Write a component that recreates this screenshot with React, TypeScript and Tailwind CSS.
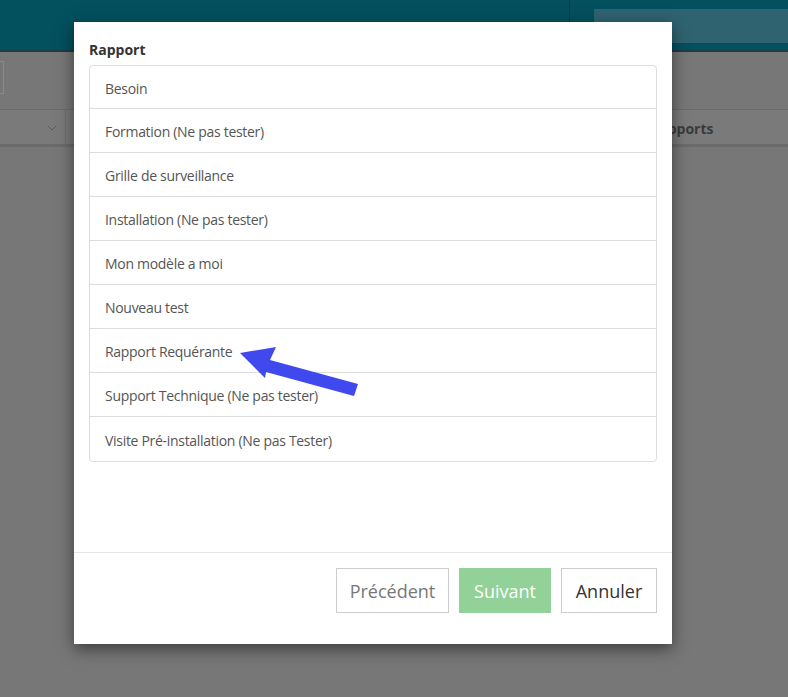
import React from 'react'

const reports = [
	'Besoin',
	'Formation (Ne pas tester)',
	'Grille de surveillance',
	'Installation (Ne pas tester)',
	'Mon modèle a moi',
	'Nouveau test',
	'Rapport Requérante',
	'Support Technique (Ne pas tester)',
	'Visite Pré-installation (Ne pas Tester)',
]

const font = { fontFamily: '"Open Sans", "Noto Sans", sans-serif' }

const App = () => {
	return (
		<div className="relative h-[697px] w-[788px] overflow-hidden bg-[#777777]" style={font}>
			{/* page behind the backdrop */}
			<div className="flex h-[52px] border-b-2 border-[#203c42] bg-[#03505f]">
				<div className="w-[570px] border-r border-[#01404b]"></div>
				<div className="flex-1 pl-[24px] pt-[9px]">
					<div className="h-[34px] bg-[#2f6370]"></div>
				</div>
			</div>
			<div className="mt-[9px] h-[33px] w-[4px] border border-l-0 border-[#8a8a8a]"></div>
			<div className="mt-[15px] flex h-[38px] border-t border-b-[3px] border-[#6b6b6b] bg-[#7a7a7a]">
				<div className="flex w-[66px] items-center justify-end border-r border-[#6b6b6b] pr-[8px] pt-[2px]">
					<svg width="10" height="6" viewBox="0 0 10 6" fill="none" stroke="#5a5a5a" strokeWidth="1">
						<path d="M1 1l4 4 4-4" />
					</svg>
				</div>
				<div className="flex flex-1 items-center pl-[584px] pt-[3px]">
					<span className="text-[14px] font-bold text-[#3a3a3a]">Rapports</span>
				</div>
			</div>

			{/* modal */}
			<div className="absolute left-[74px] top-[22px] flex h-[622px] w-[598px] flex-col bg-white shadow-[0_5px_15px_rgba(0,0,0,0.5)]">
				<div className="flex-1 px-[15px] pt-[18px]">
					<h4 className="mb-[5px] text-[14px] font-bold leading-[20px] text-[#333]">Rapport</h4>
					<ul className="divide-y divide-[#dddddd] rounded-[4px] border border-[#dddddd]">
						{reports.map((r) => (
							<li
								key={r}
								className="flex h-[44px] items-center px-[15px] pt-[2px] text-[14px] tracking-[-0.3px] text-[#555] first:h-[43px]">
								{r}
							</li>
						))}
					</ul>
				</div>
				<div className="flex h-[92px] items-start justify-end gap-[10px] border-t border-[#e5e5e5] px-[15px] pt-[15px]">
					<button className="h-[45px] w-[113px] border border-[#cccccc] bg-white pt-[1px] text-[18px] text-[#777]">
						Précédent
					</button>
					<button className="h-[45px] w-[92px] bg-[#92d198] pt-[1px] text-[18px] text-white">
						Suivant
					</button>
					<button className="h-[45px] w-[96px] border border-[#cccccc] bg-white pt-[1px] text-[18px] text-[#333]">
						Annuler
					</button>
				</div>
			</div>

			{/* annotation arrow */}
			<svg className="absolute left-[236px] top-[340px]" width="130" height="60" viewBox="236 340 130 60">
				<polygon
					points="240,353 276,347 270,360 358,384 354,396 266,372 265,378"
					fill="#4049ee"
				/>
			</svg>
		</div>
	)
}

export default App
